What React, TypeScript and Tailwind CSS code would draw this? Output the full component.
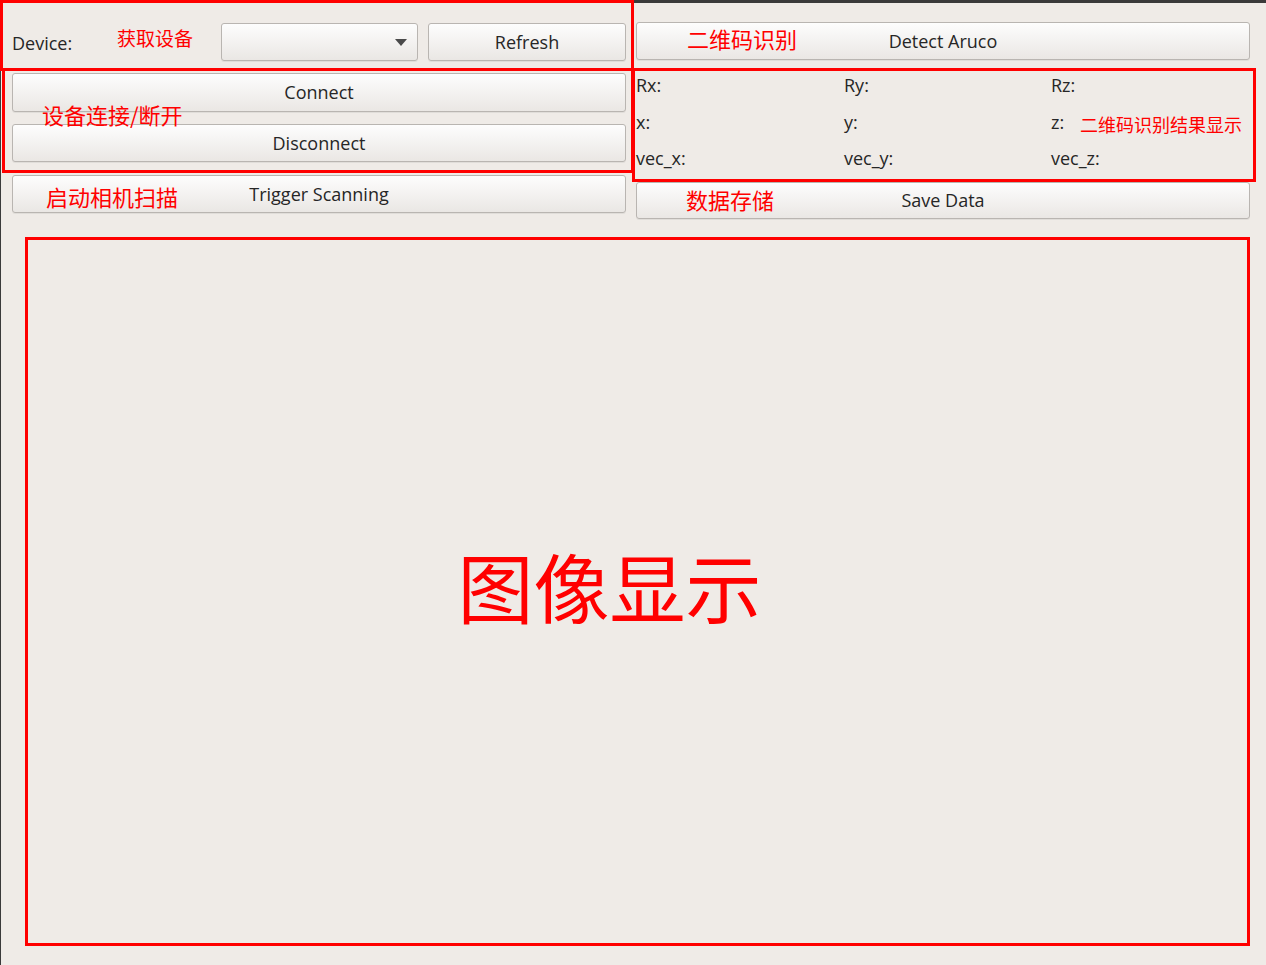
import { ReactNode } from 'react'

const ui = { fontFamily: '"Open Sans", "Noto Sans", "Liberation Sans", sans-serif' }
const cjk = { fontFamily: '"Noto Sans CJK SC", "Noto Sans", sans-serif' }

function Btn({ children, className = '' }: { children?: ReactNode; className?: string }) {
  return (
    <button
      className={`relative flex items-center justify-center rounded-[3px] border border-[#b9b5b1] bg-gradient-to-b from-[#fdfdfd] to-[#eae7e4] text-[18px] text-[#262626] shadow-[0_1px_0_rgba(0,0,0,0.06)] ${className}`}
    >
      {children}
    </button>
  )
}

function Note({ children, className = '' }: { children: ReactNode; className?: string }) {
  return (
    <span className={`absolute leading-none whitespace-nowrap text-[#ff0000] ${className}`} style={cjk}>
      {children}
    </span>
  )
}

const results = [
  ['Rx:', 'Ry:', 'Rz:'],
  ['x:', 'y:', 'z:'],
  ['vec_x:', 'vec_y:', 'vec_z:'],
]

export default function App() {
  return (
    <div className="relative w-[1266px] h-[965px] overflow-hidden bg-[#efebe7]" style={ui}>
      {/* window frame */}
      <div className="h-full border-t-[3px] border-l border-[#3a3a3a] pl-[11px] pr-[16px]">
        <div className="flex gap-[10px]">
          {/* left column */}
          <div className="w-[614px] pt-[20px] flex flex-col">
            <div className="flex items-center gap-[10px] h-[38px]">
              <span className="w-[199px] pt-[2px] text-[18px] text-[#262626]">Device:</span>
              <Btn className="w-[197px] h-[38px] !justify-end pr-[10px]">
                <svg width="12" height="7" viewBox="0 0 12 7">
                  <path d="M0 0 L12 0 L6 7 Z" fill="#4a4a4a" />
                </svg>
              </Btn>
              <Btn className="w-[198px] h-[38px]">Refresh</Btn>
            </div>
            <Btn className="mt-[12px] h-[39px]">Connect</Btn>
            <Btn className="mt-[12px] h-[38px]">Disconnect</Btn>
            <Btn className="mt-[13px] h-[38px]">Trigger Scanning</Btn>
          </div>

          {/* right column */}
          <div className="w-[614px] pt-[19px] flex flex-col">
            <Btn className="h-[38px]">Detect Aruco</Btn>
            <div className="mt-[7px] grid grid-cols-[208px_207px_1fr] grid-rows-[37px_36px_36px] text-[18px] text-[#262626]">
              {results.flat().map((label) => (
                <div key={label} className="flex items-center">
                  {label}
                </div>
              ))}
            </div>
            <Btn className="mt-[6px] h-[37px]">Save Data</Btn>
          </div>
        </div>

        {/* image display */}
        <div className="mt-[18px] ml-[13px] w-[1225px] h-[709px] border-[3px] border-[#ff0000] flex items-center justify-center pr-[56px] pb-[14px]">
          <span className="text-[76px] leading-none text-[#ff0000]" style={cjk}>
            图像显示
          </span>
        </div>
      </div>

      {/* annotation boxes */}
      <div className="absolute left-0 top-0 w-[634px] h-[71px] border-[3px] border-[#ff0000]" />
      <div className="absolute left-[2px] top-[68px] w-[632px] h-[105px] border-[3px] border-[#ff0000]" />
      <div className="absolute left-[632px] top-[68px] w-[624px] h-[114px] border-[3px] border-[#ff0000]" />

      {/* annotation labels */}
      <Note className="left-[117px] top-[28px] text-[19px]">获取设备</Note>
      <Note className="left-[42px] top-[103px] text-[22px]">设备连接/断开</Note>
      <Note className="left-[46px] top-[185px] text-[22px]">启动相机扫描</Note>
      <Note className="left-[687px] top-[27px] text-[22px]">二维码识别</Note>
      <Note className="left-[686px] top-[188px] text-[22px]">数据存储</Note>
      <Note className="left-[1080px] top-[115px] text-[18px]">二维码识别结果显示</Note>
    </div>
  )
}
